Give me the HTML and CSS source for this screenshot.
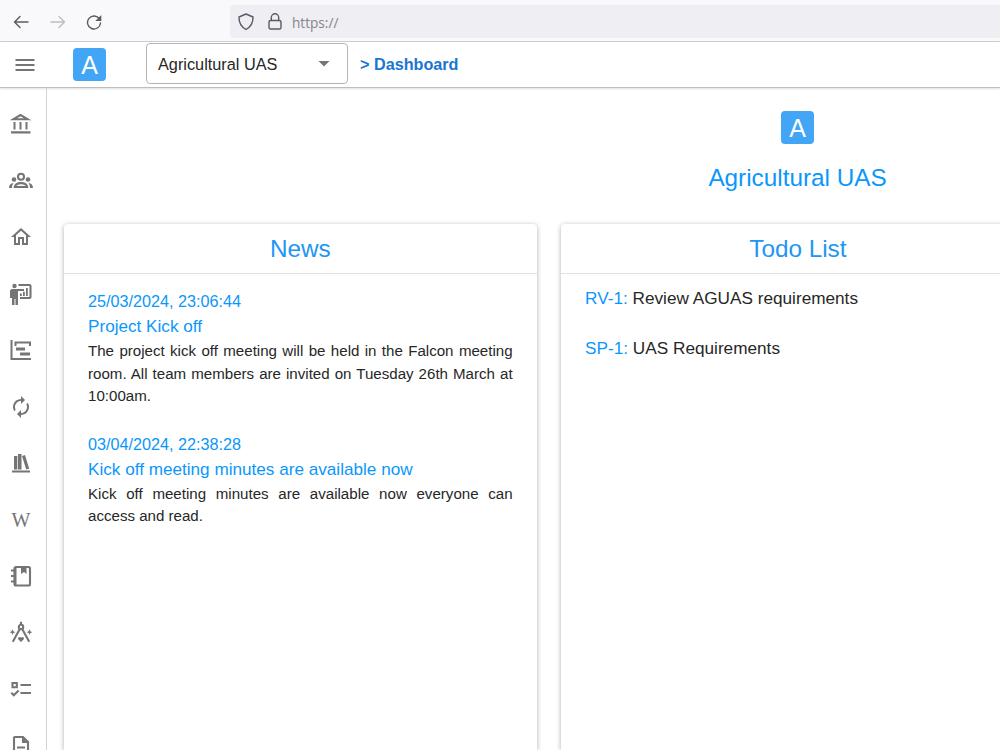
FILE: index.html
```html
<!DOCTYPE html>
<html lang="en">
<head>
    <meta charset="UTF-8">
    <meta name="viewport" content="width=device-width, initial-scale=1.0">
    <title>Dashboard</title>
    <link rel="stylesheet" href="styles.css">
</head>
<body>
    <div class="browser-bar">
        <div class="browser-nav">
            <svg width="16" height="16" viewBox="0 0 16 16"><path d="M15 8H1.5M7 2.5L1.5 8L7 13.5"/></svg>
            <svg class="disabled" width="16" height="16" viewBox="0 0 16 16"><path d="M1 8h13.5M9 2.5L14.5 8L9 13.5"/></svg>
            <svg width="16" height="16" viewBox="0 0 16 16"><path d="M14.5 9A6.5 6.5 0 1 1 13.5 5"/><path class="solid" d="M15.3 1v6H9.3z"/></svg>
        </div>
        <div class="url-bar">
            <svg width="16" height="18" viewBox="0 0 16 18"><path d="M8 1L15 4C15.2 10 12.5 14 8 16.5C3.5 14 .8 10 1 4Z"/></svg>
            <svg width="14" height="18" viewBox="0 0 14 18"><rect x="1" y="7.5" width="12" height="8.5" rx="1.5"/><path d="M3.3 7.5V4.5a3.7 3.7 0 0 1 7.4 0v3"/></svg>
            <span>https://</span>
        </div>
    </div>

    <header class="app-bar">
        <svg class="menu-icon" width="20" height="14" viewBox="0 0 20 14"><path d="M.5 2h19M.5 7h19M.5 12h19"/></svg>
        <div class="logo">A</div>
        <div class="project-select">
            <span>Agricultural UAS</span>
            <svg width="12" height="6" viewBox="0 0 12 6"><path d="M.5 0h11L6 5.5z"/></svg>
        </div>
        <div class="breadcrumb">&gt; Dashboard</div>
    </header>

    <div class="layout">
        <nav class="sidebar">
            <svg viewBox="0 0 24 24"><path class="line" d="M4.5 7.2L11.500 3l7 4.200z"/><path d="M4.500 10h2v7.500h-2zM10.500 10h2v7.500h-2zM16.500 10h2v7.500h-2zM2 19.300h19.500v2.200H2z"/></svg>
            <svg viewBox="0 0 24 24"><circle class="line" cx="12" cy="7.700" r="3"/><circle cx="5" cy="10.500" r="2.300"/><circle cx="19" cy="10.500" r="2.300"/><path class="line" d="M5.800 18c.5-2.800 2.800-3.900 6.200-3.900s5.700 1.100 6.200 3.900z"/><path d="M0 19c0-3 1.500-4.700 4.600-4.900C3.600 15.400 3 17 2.900 19zM24 19c0-3-1.500-4.700-4.600-4.900 1 1.300 1.600 2.900 1.700 4.900z"/></svg>
            <svg viewBox="0 0 24 24"><path d="M12 5.690l5 4.500V18h-2v-6H9v6H7v-7.810l5-4.500M12 3L2 12h3v8h6v-6h2v6h6v-8h3L12 3z"/></svg>
            <svg viewBox="0 0 24 24"><circle cx="5.500" cy="4" r="2.200"/><path d="M2.500 7H15v2H9v14H6.500v-6h-1v6H3v-7H1V8.500z"/><path class="line" d="M9.500 3h11q1 0 1 1v11q0 1-1 1H11"/><path d="M11 11.500h1.800V14H11zM14 9.800h1.800V14H14zM17 6h1.800v8H17z"/></svg>
            <svg viewBox="0 0 24 24"><path d="M1.500 2h2v18H22v2H1.500zM5.500 3.500H22V8h-2V5.500H7.500V8h-2zM7 9.500h9v3H7zM11 14.500h10v3H11z"/></svg>
            <svg viewBox="0 0 24 24"><path d="M12 6v3l4-4-4-4v3c-4.420 0-8 3.580-8 8 0 1.570.46 3.030 1.240 4.260L6.700 14.800c-.45-.83-.7-1.790-.7-2.800 0-3.310 2.690-6 6-6zm6.760 1.740L17.300 9.200c.44.84.7 1.790.7 2.800 0 3.310-2.690 6-6 6v-3l-4 4 4 4v-3c4.420 0 8-3.580 8-8 0-1.570-.46-3.030-1.240-4.260z"/></svg>
            <svg viewBox="0 0 24 24"><path d="M5 5h3.300v13.500H5zM9 3h3.500v15.500H9zM13 5l3-1 4.200 13.700-3 .9zM3 19.500h18v2H3z"/></svg>
            <span class="wiki-icon">W</span>
            <svg viewBox="0 0 24 24"><rect class="line" x="5.500" y="3" width="15.500" height="18.500" rx="1.500"/><path d="M12 3h5.500v7L15 8l-3 2zM5 3h2.500v18H5z"/><path class="line" d="M2 6.500h4M2 12h4M2 17.500h4"/></svg>
            <svg viewBox="0 0 24 24"><circle class="line" cx="12" cy="6" r="2.200"/><path class="line" d="M12 .8v3M10.800 8L3.800 20.800M13.200 8L20.200 20.800"/><path d="M12 21l-2.800-2.800c-.8-2 1.800-3 2.800-1.400 1-1.600 3.600-.6 2.800 1.400zM3.500 8.300l.9 2 2 .9-2 .9-.9 2-.9-2-2-.9 2-.9zM20.500 8.300l.9 2 2 .9-2 .9-.9 2-.9-2-2-.9 2-.9z"/></svg>
            <svg viewBox="0 0 24 24"><path class="line" d="M3.500 6h4.300v4.300H3.500zM11.500 8H22M11.500 16H22M2.300 15.800l2.500 2.500 4.800-4.800"/></svg>
            <svg viewBox="0 0 24 24"><path class="line" d="M14 3H6q-1 0-1 1v17h14V8zM8 13.500h8M8 17.500h8"/><path d="M13 3v6h6z"/></svg>
        </nav>

        <main class="content">
            <div class="project-header">
                <div class="logo">A</div>
                <h1>Agricultural UAS</h1>
            </div>

            <div class="cards">
                <section class="card">
                    <h2>News</h2>
                    <div class="news">
                        <article>
                            <div class="date">25/03/2024, 23:06:44</div>
                            <div class="title">Project Kick off</div>
                            <p>The project kick off meeting will be held in the Falcon meeting room. All team members are invited on Tuesday 26th March at 10:00am.</p>
                        </article>
                        <article>
                            <div class="date">03/04/2024, 22:38:28</div>
                            <div class="title">Kick off meeting minutes are available now</div>
                            <p>Kick off meeting minutes are available now everyone can access and read.</p>
                        </article>
                    </div>
                </section>
                <section class="card">
                    <h2>Todo List</h2>
                    <div class="todo">
                        <div><a>RV-1:</a> Review AGUAS requirements</div>
                        <div><a>SP-1:</a> UAS Requirements</div>
                    </div>
                </section>
            </div>
        </main>
    </div>
</body>
</html>
```
FILE: styles.css
```css
* {
    box-sizing: border-box;
}
body {
    font-family: "Liberation Sans", Arial, sans-serif;
    background-color: #fff;
    color: #272727;
    margin: 0;
    height: 100vh;
    overflow: hidden;
    display: flex;
    flex-direction: column;
}
svg {
    display: block;
    flex: none;
}

/* browser toolbar */
.browser-bar {
    flex: none;
    display: flex;
    align-items: center;
    height: 42px;
    padding-top: 2px;
    background-color: #f9f9fb;
    border-bottom: 1px solid #cdcdd2;
}
.browser-bar svg {
    fill: none;
    stroke: #5b5b66;
    stroke-width: 1.4;
    stroke-linecap: round;
    stroke-linejoin: round;
}
.browser-bar .disabled {
    stroke: #bcbcc2;
}
.browser-bar .solid {
    fill: #5b5b66;
    stroke: none;
}
.browser-nav {
    display: flex;
    gap: 20.5px;
    width: 230px;
    padding-left: 13px;
}
.url-bar {
    flex: 1;
    display: flex;
    align-items: center;
    height: 33px;
    padding-left: 8px;
    background-color: #eeeef3;
    border-radius: 4px 0 0 4px;
    font-family: "Open Sans", sans-serif;
    font-size: 13.6px;
    color: #85858e;
}
.url-bar span {
    padding-top: 1px;
}
.url-bar svg + svg {
    margin: 0 10px 0 14px;
}

/* application bar */
.app-bar {
    flex: none;
    display: flex;
    align-items: center;
    height: 46px;
    padding-left: 15px;
    border-bottom: 1px solid #bdbdbd;
    box-shadow: 0 1px 2px rgba(0, 0, 0, 0.12);
}
.menu-icon {
    stroke: #757575;
    stroke-width: 2;
}
.logo {
    width: 33px;
    height: 33px;
    border-radius: 4px;
    background-color: #42a5f5;
    color: #fff;
    font-size: 25px;
    line-height: 34px;
    text-align: center;
}
.app-bar .logo {
    margin-left: 38px;
}
.project-select {
    display: flex;
    align-items: center;
    justify-content: space-between;
    width: 202px;
    height: 41px;
    margin: -2px 12px 0 40px;
    padding: 1px 17px 0 11px;
    border: 1px solid #b4b4b4;
    border-radius: 4px;
    font-size: 16.3px;
}
.project-select svg {
    fill: #757575;
}
.breadcrumb {
    font-size: 16.2px;
    font-weight: bold;
    color: #1976d2;
}

.layout {
    flex: 1;
    display: flex;
    min-height: 0;
    overflow: hidden;
}

/* sidebar */
.sidebar {
    flex: none;
    width: 47px;
    padding: 24px 0 0 9px;
    border-right: 1px solid #d3d3d3;
    display: flex;
    flex-direction: column;
    gap: 32.5px;
    overflow: hidden;
}
.sidebar svg {
    width: 24px;
    height: 24px;
    fill: #757575;
}
.sidebar .line {
    fill: none;
    stroke: #757575;
    stroke-width: 2.1;
}
.wiki-icon {
    flex: none;
    width: 24px;
    height: 24px;
    font-family: "Liberation Serif", serif;
    font-size: 20px;
    line-height: 24px;
    text-align: center;
    color: #757575;
}

/* page content runs past the right edge */
.content {
    flex: none;
    width: 1501px;
    padding: 23px 17px 0;
    display: flex;
    flex-direction: column;
}
.project-header {
    flex: none;
    display: flex;
    flex-direction: column;
    align-items: center;
    height: 113px;
}
h1, h2 {
    margin: 0;
    font-size: 24.3px;
    font-weight: normal;
}
h1 {
    margin-top: 18px;
    line-height: 32px;
    color: #0a97fb;
}
.cards {
    flex: 1;
    display: flex;
    gap: 24px;
}
.card {
    width: 472.6px;
    border-radius: 4px 4px 0 0;
    box-shadow: 0 1px 5px rgba(0, 0, 0, 0.32);
}
.card h2 {
    height: 50px;
    line-height: 50px;
    text-align: center;
    color: #2196f3;
    border-bottom: 1px solid #e2e2e2;
}
.card + .card h2 {
    padding-left: 2px;
}
.news {
    padding: 15px 24px;
}
.news article {
    margin-bottom: 24px;
}
.date, .title {
    color: #0a97fb;
    line-height: 25px;
}
.date {
    font-size: 16.2px;
}
.title {
    font-size: 17.15px;
}
.news p {
    margin: 0;
    padding-top: 1px;
    font-size: 15.1px;
    line-height: 22.6px;
    text-align: justify;
}
.todo {
    padding: 12px 24.5px;
    display: flex;
    flex-direction: column;
    gap: 25px;
    font-size: 17.2px;
    line-height: 25px;
}
.todo a {
    color: #0a97fb;
}
```
